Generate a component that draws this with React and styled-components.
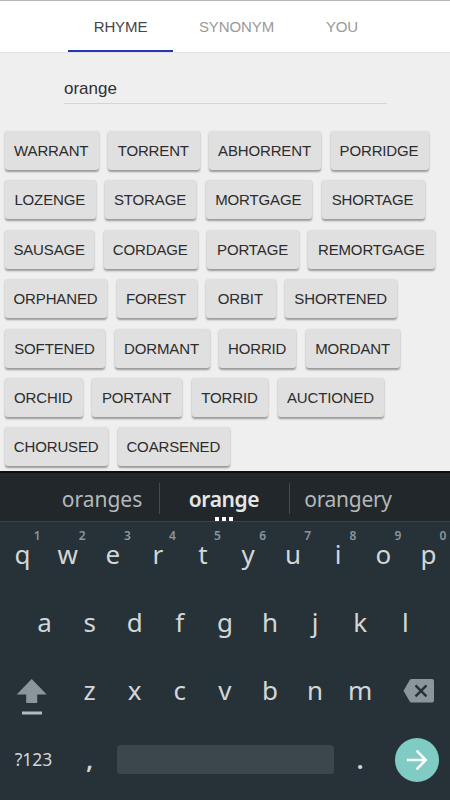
import styled, { createGlobalStyle, css } from 'styled-components';

const GlobalStyle = createGlobalStyle`
  * {
    box-sizing: border-box;
  }
  body {
    margin: 0;
    background: #efefef;
    overflow: hidden;
  }
`;

const tabs = [
  { label: 'RHYME', width: 105, active: true },
  { label: 'SYNONYM', width: 127 },
  { label: 'YOU', width: 84 },
];

const words = [
  [['WARRANT', 93.5], ['TORRENT', 91.5], ['ABHORRENT', 112], ['PORRIDGE', 98]],
  [['LOZENGE', 90.5], ['STORAGE', 91], ['MORTGAGE', 106.5], ['SHORTAGE', 103]],
  [['SAUSAGE', 89.3], ['CORDAGE', 94], ['PORTAGE', 91.5], ['REMORTGAGE', 127]],
  [['ORPHANED', 102], ['FOREST', 80], ['ORBIT', 69.7], ['SHORTENED', 112]],
  [['SOFTENED', 100], ['DORMANT', 95], ['HORRID', 77.3], ['MORDANT', 94.7]],
  [['ORCHID', 77.5], ['PORTANT', 90.2], ['TORRID', 76.5], ['AUCTIONED', 106.7]],
  [['CHORUSED', 103.3], ['COARSENED', 112]],
];

const topKeys = 'qwertyuiop'.split('');
const middleKeys = 'asdfghjkl'.split('');
const bottomKeys = 'zxcvbnm'.split('');

function WordList() {
  return (
    <Words>
      {words.map((row) => (
        <WordRow key={row[0][0]}>
          {row.map(([word, width]) => (
            <WordButton key={word} $width={width}>{word}</WordButton>
          ))}
        </WordRow>
      ))}
    </Words>
  );
}

function Keyboard() {
  return (
    <KeyboardPanel>
      <Suggestions>
        <Suggestion $width={113}>oranges</Suggestion>
        <Suggestion $width={131} $selected>
          orange
          <MoreDots>
            <i />
            <i />
            <i />
          </MoreDots>
        </Suggestion>
        <Suggestion $width={117} $tight>orangery</Suggestion>
      </Suggestions>

      <KeyRow>
        {topKeys.map((key, i) => (
          <Key key={key}>
            {key}
            <Hint>{(i + 1) % 10}</Hint>
          </Key>
        ))}
      </KeyRow>
      <KeyRow $inset={22}>
        {middleKeys.map((key) => (
          <Key key={key}>{key}</Key>
        ))}
      </KeyRow>
      <KeyRow>
        <SideKey>
          <svg width="32" height="38" viewBox="0 0 32 38">
            <path d="M16.700 0 31.700 15.500H22.200V24H11.200V15.500H1.700Z" fill="#8b969b" />
            <rect x="7" y="32.500" width="20" height="3" fill="#b4babc" />
          </svg>
        </SideKey>
        {bottomKeys.map((key) => (
          <Key key={key}>{key}</Key>
        ))}
        <SideKey $right>
          <svg width="32" height="24" viewBox="0 0 32 24">
            <path
              d="M8.500 0H29a2 2 0 0 1 2 2V21.500a2 2 0 0 1-2 2H8.500a2 2 0 0 1-1.600-.8L.5 11.800 6.900.8A2 2 0 0 1 8.500 0Z"
              fill="#8b969b"
            />
            <path d="M12.500 6.300 23.500 17.300M23.500 6.300 12.500 17.300" stroke="#263238" strokeWidth="2.400" />
          </svg>
        </SideKey>
      </KeyRow>
      <KeyRow>
        <SymbolKey>?123</SymbolKey>
        <Key $bold>,</Key>
        <SpaceBar />
        <Key $wide $bold>.</Key>
        <EnterKey>
          <svg width="22" height="22" viewBox="0 0 22 22" fill="none" stroke="#fff" strokeWidth="2.500">
            <path d="M1 11H20M10.500 1.700 19.800 11 10.500 20.300" />
          </svg>
        </EnterKey>
      </KeyRow>
    </KeyboardPanel>
  );
}

function App() {
  return (
    <Screen>
      <GlobalStyle />
      <TabBar>
        {tabs.map((tab) => (
          <Tab key={tab.label} $width={tab.width} $active={tab.active}>
            {tab.label}
          </Tab>
        ))}
      </TabBar>
      <Content>
        <SearchField>orange</SearchField>
        <WordList />
      </Content>
      <Keyboard />
    </Screen>
  );
}

export default App;

const Screen = styled.div`
  display: flex;
  flex-direction: column;
  width: 450px;
  height: 800px;
  background: #efefef;
  font-family: 'Liberation Sans', Arial, sans-serif;
`;

const TabBar = styled.div`
  display: flex;
  justify-content: center;
  flex: none;
  height: 53px;
  padding-left: 2px;
  background: #fff;
  border-top: 1px solid #b8b4b0;
  border-bottom: 1px solid #e2e2e2;
`;

const Tab = styled.div`
  width: ${({ $width }) => $width}px;
  border-bottom: 2px solid ${({ $active }) => ($active ? '#2338b0' : 'transparent')};
  color: ${({ $active }) => ($active ? '#444' : '#999')};
  font-size: 15px;
  letter-spacing: -0.1px;
  line-height: 51px;
  text-align: center;
`;

const Content = styled.div`
  flex: none;
  height: 418px;
  padding-top: 25px;
`;

const SearchField = styled.div`
  width: 323px;
  height: 26px;
  margin-left: 64px;
  border-bottom: 1px solid #d4d4d4;
  color: #303030;
  font-size: 17px;
  line-height: 21px;
`;

const Words = styled.div`
  display: flex;
  flex-direction: column;
  gap: 10.4px;
  padding: 27px 0 0 5px;
`;

const WordRow = styled.div`
  display: flex;
  gap: 9.5px;
`;

const WordButton = styled.div`
  flex: none;
  width: ${({ $width }) => $width}px;
  height: 39px;
  padding-right: 1px;
  border-radius: 3px;
  background: #e0e0e0;
  box-shadow: 0 1.5px 2px rgba(0, 0, 0, 0.36);
  color: #2c2c2c;
  font-size: 15px;
  letter-spacing: -0.14px;
  line-height: 39px;
  text-align: center;
  white-space: nowrap;
`;

const KeyboardPanel = styled.div`
  flex: none;
  height: 329px;
  background: #263238;
  font-family: 'Noto Sans', sans-serif;
`;

const Suggestions = styled.div`
  display: flex;
  justify-content: center;
  height: 51px;
  padding: 10px 0 0 2px;
  border-top: 2px solid #0c0f10;
  border-bottom: 1px solid #37444a;
  background: #21272b;
`;

const Suggestion = styled.div`
  position: relative;
  width: ${({ $width }) => $width}px;
  height: 31px;
  color: #b5b8ba;
  font-size: 21px;
  letter-spacing: ${({ $tight }) => ($tight ? '-0.3px' : 'normal')};
  line-height: 32px;
  text-align: center;

  ${({ $selected }) => $selected && css`
    border-left: 1px solid #444a4d;
    border-right: 1px solid #444a4d;
    color: #e6e6e6;
    font-weight: 600;
    letter-spacing: -0.4px;
  `}
`;

const MoreDots = styled.span`
  position: absolute;
  bottom: -7px;
  left: 55px;
  display: flex;
  gap: 3px;

  i {
    width: 4px;
    height: 4px;
    background: #fff;
  }
`;

const KeyRow = styled.div`
  display: flex;
  height: 68.2px;
  padding: 0 ${({ $inset }) => $inset || 0}px;
`;

const Key = styled.div`
  position: relative;
  flex: none;
  width: ${({ $wide }) => ($wide ? 52 : 45.1)}px;
  color: #d3d6d7;
  font-size: 26px;
  font-weight: ${({ $bold }) => ($bold ? 600 : 400)};
  line-height: 64px;
  text-align: center;
`;

const Hint = styled.span`
  position: absolute;
  top: 6px;
  right: 4.5px;
  color: #8b969b;
  font-size: 12px;
  font-weight: 600;
  line-height: 16px;
`;

const SideKey = styled.div`
  display: flex;
  flex: none;
  justify-content: ${({ $right }) => ($right ? 'flex-end' : 'flex-start')};
  width: 67px;
  padding: 21px 15px 0;
`;

const SymbolKey = styled.div`
  width: 67px;
  color: #d3d6d7;
  font-size: 17.5px;
  line-height: 65px;
  text-align: center;
`;

const SpaceBar = styled.div`
  width: 217px;
  height: 29px;
  margin: 18px 0 0 5px;
  border-radius: 4px;
  background: #3c474c;
`;

const EnterKey = styled.div`
  display: flex;
  align-items: center;
  justify-content: center;
  width: 44px;
  height: 44px;
  margin: 11px 0 0 9px;
  border-radius: 50%;
  background: #80cbc4;
`;
